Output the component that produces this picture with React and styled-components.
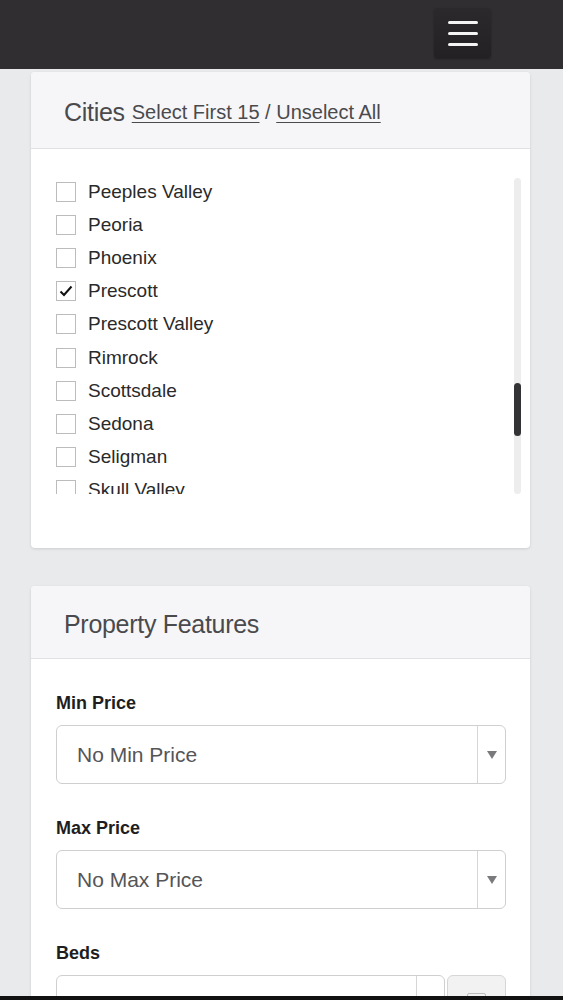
import styled, { createGlobalStyle } from 'styled-components';

const GlobalStyle = createGlobalStyle`
    html, body {
        margin: 0;
        padding: 0;
        background: #e9eaeb;
        font-family: "Liberation Sans", Arial, sans-serif;
    }
    * {
        box-sizing: border-box;
    }
`;

const CITIES = [
    { name: 'Peeples Valley', checked: false },
    { name: 'Peoria', checked: false },
    { name: 'Phoenix', checked: false },
    { name: 'Prescott', checked: true },
    { name: 'Prescott Valley', checked: false },
    { name: 'Rimrock', checked: false },
    { name: 'Scottsdale', checked: false },
    { name: 'Sedona', checked: false },
    { name: 'Seligman', checked: false },
    { name: 'Skull Valley', checked: false },
];

const Page = styled.div`
    height: 1000px;
    overflow: hidden;
`;

const NavBar = styled.header`
    height: 69px;
    background: #302e31;
    display: flex;
    justify-content: flex-end;
    align-items: flex-start;
    padding: 8px 72px 0 0;
`;

const MenuButton = styled.button`
    width: 57px;
    height: 50px;
    border: none;
    border-radius: 3px;
    background: linear-gradient(#2b292b, #232123);
    box-shadow: 0 1px 2px rgba(0, 0, 0, 0.35);
    display: flex;
    flex-direction: column;
    align-items: center;
    justify-content: center;
    gap: 8px;
    padding: 0;
`;

const MenuLine = styled.span`
    display: block;
    width: 30px;
    height: 3px;
    border-radius: 2px;
    background: #f4f4f4;
`;

const Content = styled.main`
    padding: 3px 33px 0 31px;
    display: flex;
    flex-direction: column;
    gap: 38px;
`;

const Card = styled.section`
    background: #fff;
    border-radius: 4px;
    box-shadow: 0 1px 3px rgba(0, 0, 0, 0.12);
    overflow: hidden;
    flex-shrink: 0;
`;

const CardHeader = styled.div`
    height: ${(props) => props.height}px;
    background: #f6f6f8;
    border-bottom: 1px solid #e1e1e3;
    display: flex;
    align-items: center;
    padding: ${(props) => props.offset}px 33px 0;
`;

const CardTitle = styled.h2`
    margin: 0;
    font-size: 25px;
    font-weight: 400;
    color: #4a4a4d;
    letter-spacing: -0.3px;
`;

const HeaderLinks = styled.span`
    font-size: 20px;
    color: #4a4a4d;
    margin-left: 7px;
`;

const HeaderLink = styled.a`
    color: #4a4a4d;
    text-decoration: underline;
    text-underline-offset: 3px;
    text-decoration-thickness: 1px;
    cursor: pointer;
`;

const CitiesBody = styled.div`
    padding: 26px 9px 54px 25px;
`;

const ListWrap = styled.div`
    display: flex;
    height: 319px;
`;

const CityList = styled.ul`
    flex: 1;
    list-style: none;
    margin: 0;
    padding: 0;
    overflow: hidden;
`;

const CityRow = styled.li`
    height: 33.2px;
    display: flex;
    align-items: center;
    gap: 12px;
    font-size: 19px;
    color: #2a2a2a;
`;

const Box = styled.span`
    width: 20px;
    height: 20px;
    border: 1px solid #bcbcbc;
    background: #fff;
    display: flex;
    align-items: center;
    justify-content: center;
    flex-shrink: 0;
`;

const Track = styled.div`
    width: 7px;
    margin-top: 3px;
    border-radius: 4px;
    background: #ededee;
`;

const Thumb = styled.div`
    width: 7px;
    height: 53px;
    margin-top: 205px;
    border-radius: 4px;
    background: #333335;
`;

const FeaturesBody = styled.div`
    padding: 33px 24px 40px 25px;
    display: flex;
    flex-direction: column;
    gap: 33px;
`;

const Field = styled.div`
    display: flex;
    flex-direction: column;
    gap: 11px;
`;

const Label = styled.label`
    font-size: 18px;
    line-height: 22px;
    font-weight: 700;
    color: #1e1e1e;
`;

const SelectRow = styled.div`
    display: flex;
    gap: 2px;
`;

const SelectBox = styled.div`
    flex: 1 1 auto;
    min-width: 0;
    height: 59px;
    border: 1px solid #cfcfcf;
    border-radius: 6px;
    display: flex;
    align-items: stretch;
    background: #fff;
`;

const SelectValue = styled.span`
    flex: 1;
    display: flex;
    align-items: center;
    padding-left: 20px;
    font-size: 21px;
    color: #555558;
`;

const Arrow = styled.span`
    width: 28px;
    border-left: 1px solid #d6d6d6;
    display: flex;
    align-items: center;
    justify-content: center;

    &::after {
        content: '';
        border-left: 5px solid transparent;
        border-right: 5px solid transparent;
        border-top: 8px solid #7a7a7c;
    }
`;

const SideButton = styled.div`
    width: 59px;
    height: 59px;
    border: 1px solid #d6d6d6;
    border-radius: 6px;
    background: #f2f2f3;
    display: flex;
    justify-content: center;
    padding-top: 17px;
    flex-shrink: 0;
`;

const SideIcon = styled.span`
    width: 19px;
    height: 19px;
    border: 1px solid #bdbdbd;
    border-radius: 2px;
`;

const BottomBar = styled.div`
    position: fixed;
    left: 0;
    right: 0;
    bottom: 0;
    height: 4px;
    background: #111;
`;

const Check = () => (
    <svg width="14" height="12" viewBox="0 0 14 12">
        <path d="M1.5 6.5 L5 10 L12.5 1.5" fill="none" stroke="#111" strokeWidth="2" />
    </svg>
);

const Select = ({ value }) => (
    <SelectBox>
        <SelectValue>{value}</SelectValue>
        <Arrow />
    </SelectBox>
);

export default function App() {
    return (
        <Page>
            <GlobalStyle />
            <NavBar>
                <MenuButton aria-label="Menu">
                    <MenuLine />
                    <MenuLine />
                    <MenuLine />
                </MenuButton>
            </NavBar>
            <Content>
                <Card>
                    <CardHeader height={77} offset={4}>
                        <CardTitle>Cities</CardTitle>
                        <HeaderLinks>
                            <HeaderLink>Select First 15</HeaderLink> / <HeaderLink>Unselect All</HeaderLink>
                        </HeaderLinks>
                    </CardHeader>
                    <CitiesBody>
                        <ListWrap>
                            <CityList>
                                {CITIES.map((city) => (
                                    <CityRow key={city.name}>
                                        <Box>{city.checked && <Check />}</Box>
                                        {city.name}
                                    </CityRow>
                                ))}
                            </CityList>
                            <Track>
                                <Thumb />
                            </Track>
                        </ListWrap>
                    </CitiesBody>
                </Card>
                <Card>
                    <CardHeader height={73} offset={4}>
                        <CardTitle>Property Features</CardTitle>
                    </CardHeader>
                    <FeaturesBody>
                        <Field>
                            <Label>Min Price</Label>
                            <Select value="No Min Price" />
                        </Field>
                        <Field>
                            <Label>Max Price</Label>
                            <Select value="No Max Price" />
                        </Field>
                        <Field>
                            <Label>Beds</Label>
                            <SelectRow>
                                <Select value="" />
                                <SideButton>
                                    <SideIcon />
                                </SideButton>
                            </SelectRow>
                        </Field>
                    </FeaturesBody>
                </Card>
            </Content>
            <BottomBar />
        </Page>
    );
}
